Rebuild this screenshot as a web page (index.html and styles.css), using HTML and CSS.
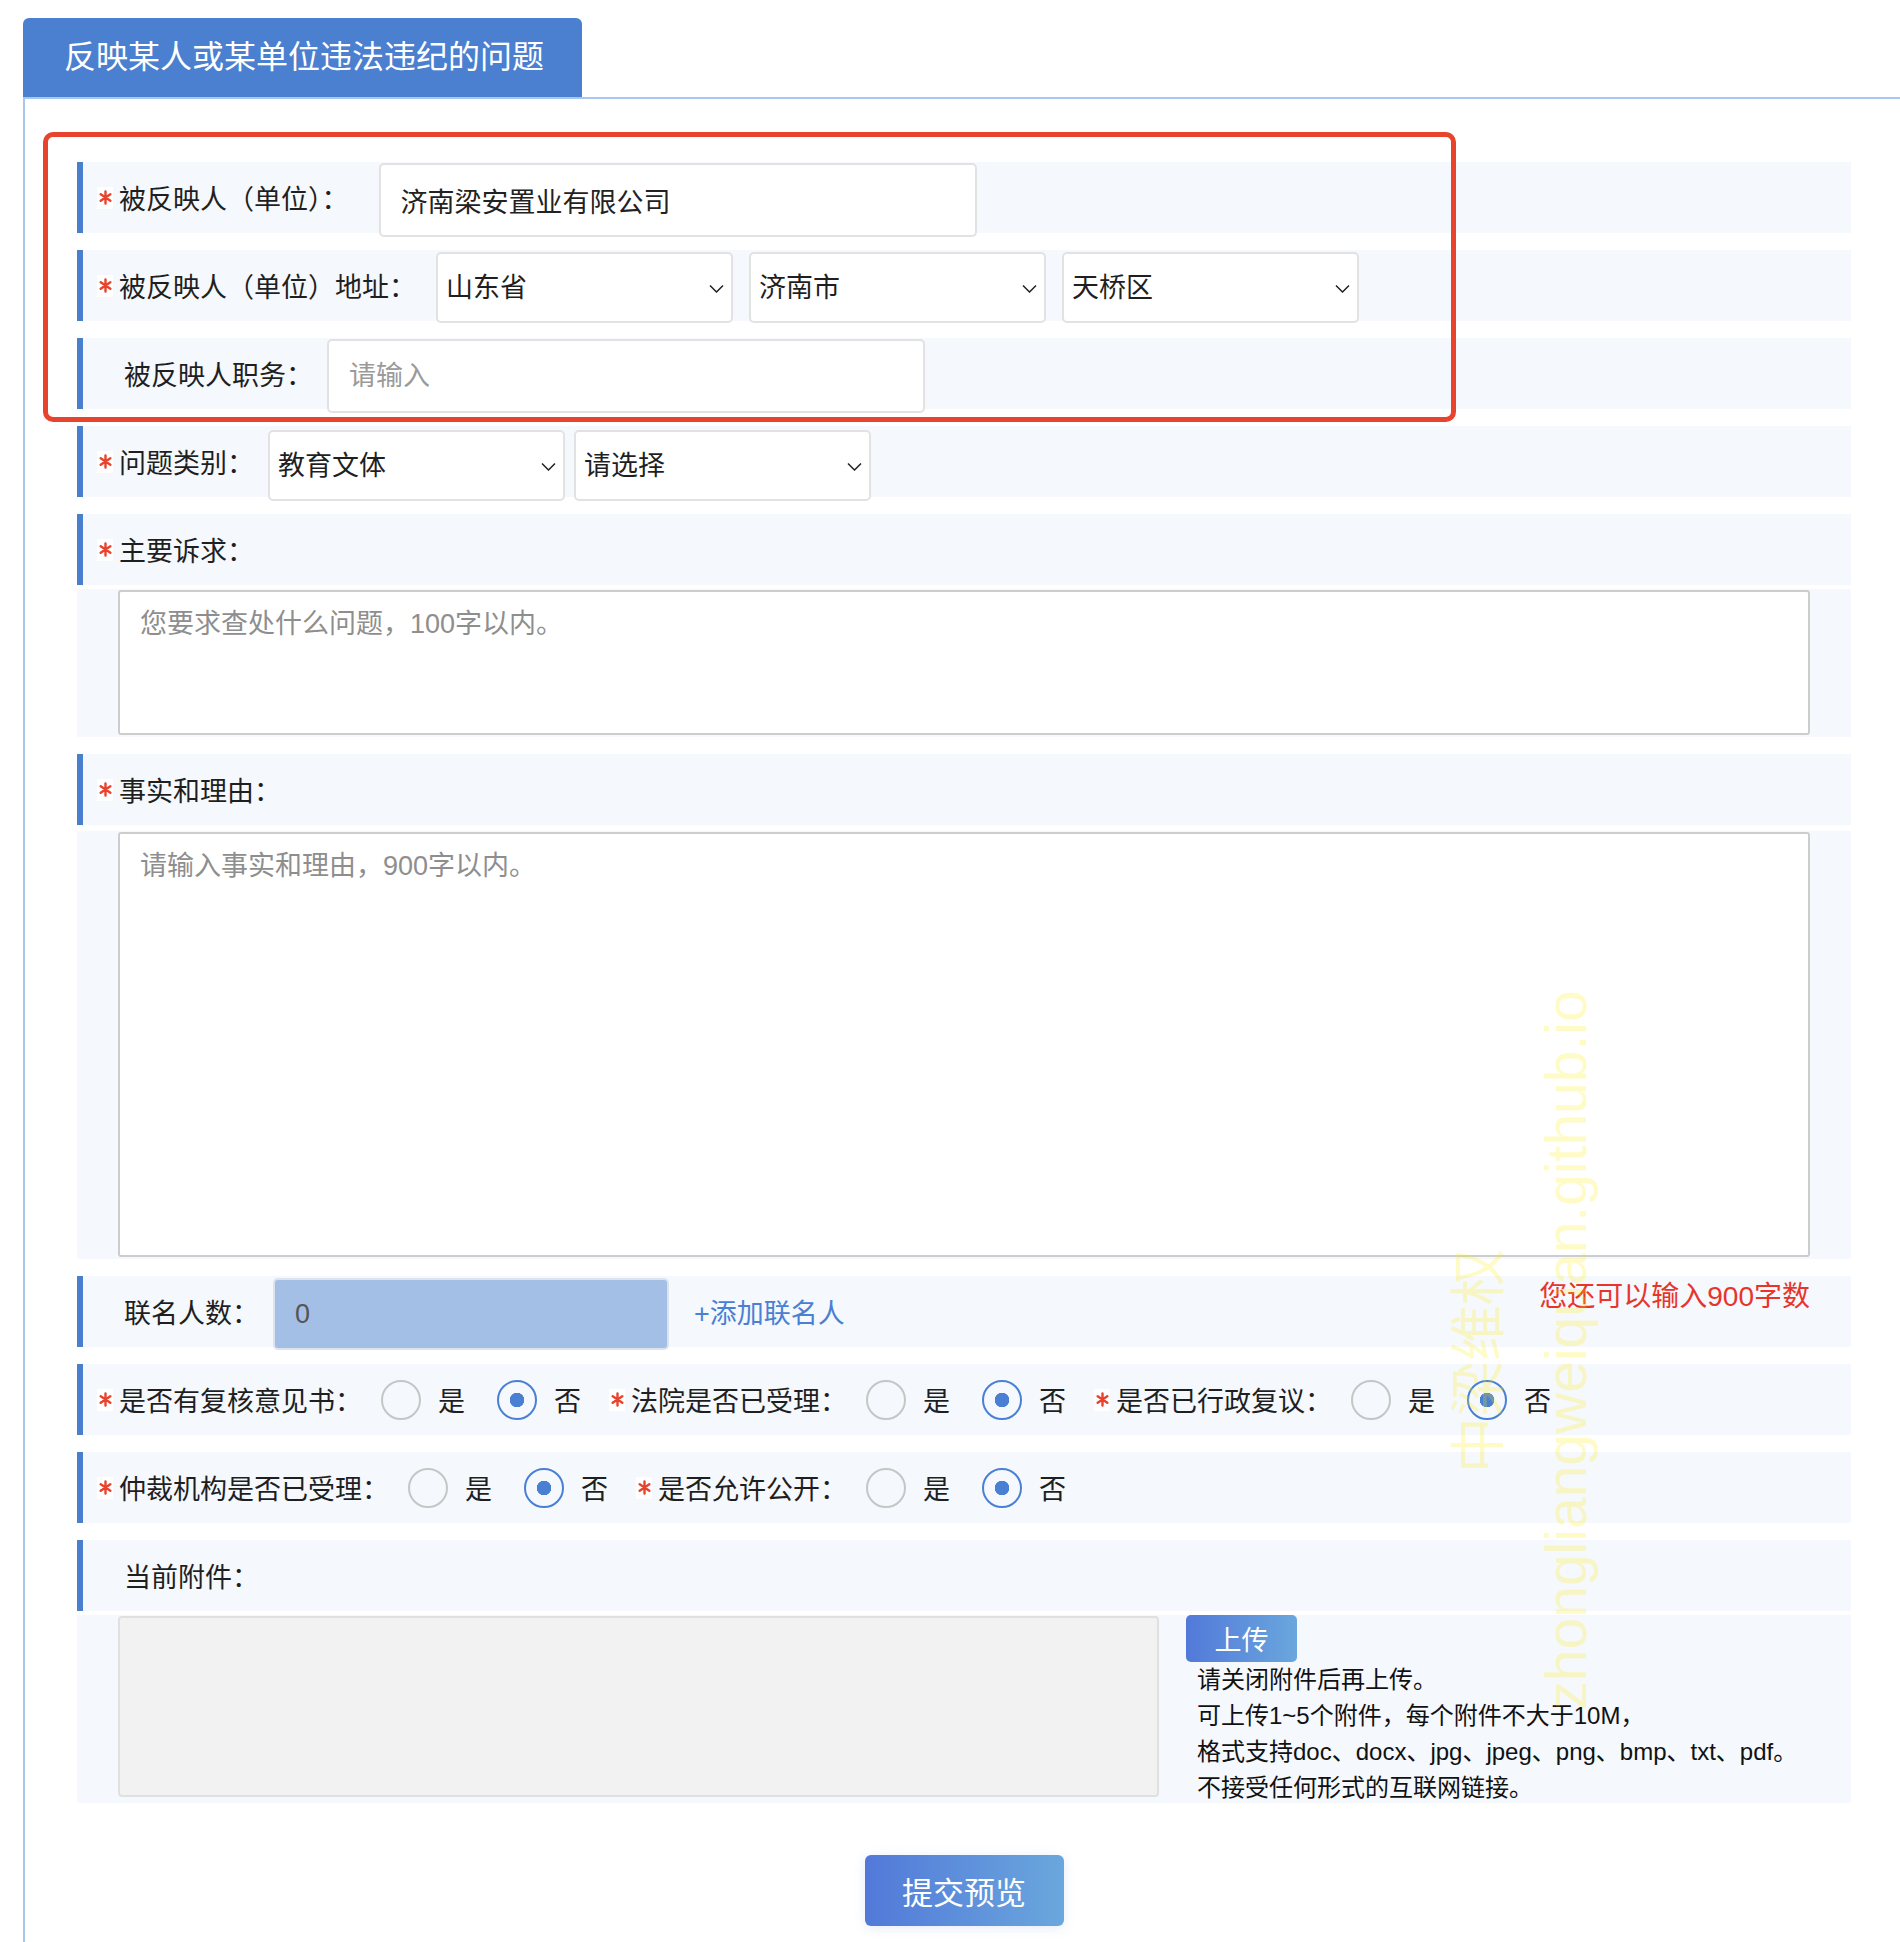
FILE: index.html
```html
<!DOCTYPE html>
<html lang="zh-CN">
<head>
    <meta charset="UTF-8">
    <meta name="viewport" content="width=device-width, initial-scale=1.0">
    <title>反映某人或某单位违法违纪的问题</title>
    <link rel="stylesheet" href="styles.css">
</head>
<body>
    <div class="page">
        <div class="tab">反映某人或某单位违法违纪的问题</div>

        <div class="panel">
            <form class="form" onsubmit="return false">
                <div class="row">
                    <span class="star"><svg viewBox="0 0 14 16" width="13" height="15"><path d="M7 1.5v13M1.8 4.5l10.4 7M1.8 11.5l10.4-7" stroke="#e8432d" stroke-width="2.6" stroke-linecap="round"/></svg></span>
                    <span class="label name">被反映人（单位）：</span>
                    <input class="field w-wide" type="text" value="济南梁安置业有限公司">
                </div>

                <div class="row">
                    <span class="star"><svg viewBox="0 0 14 16" width="13" height="15"><path d="M7 1.5v13M1.8 4.5l10.4 7M1.8 11.5l10.4-7" stroke="#e8432d" stroke-width="2.6" stroke-linecap="round"/></svg></span>
                    <span class="label addr">被反映人（单位）地址：</span>
                    <div class="select-list">
                        <span class="select">
                            <select><option>山东省</option></select>
                            <svg class="chev" viewBox="0 0 15 9" width="15" height="9"><path d="M1 1.5l6.5 6.5 6.5-6.5" fill="none" stroke="#222" stroke-width="1.5"/></svg>
                        </span>
                        <span class="select">
                            <select><option>济南市</option></select>
                            <svg class="chev" viewBox="0 0 15 9" width="15" height="9"><path d="M1 1.5l6.5 6.5 6.5-6.5" fill="none" stroke="#222" stroke-width="1.5"/></svg>
                        </span>
                        <span class="select">
                            <select><option>天桥区</option></select>
                            <svg class="chev" viewBox="0 0 15 9" width="15" height="9"><path d="M1 1.5l6.5 6.5 6.5-6.5" fill="none" stroke="#222" stroke-width="1.5"/></svg>
                        </span>
                    </div>
                </div>

                <div class="row">
                    <span class="nostar"></span>
                    <span class="label">被反映人职务：</span>
                    <input class="field w-wide" type="text" placeholder="请输入">
                </div>

                <div class="row">
                    <span class="star"><svg viewBox="0 0 14 16" width="13" height="15"><path d="M7 1.5v13M1.8 4.5l10.4 7M1.8 11.5l10.4-7" stroke="#e8432d" stroke-width="2.6" stroke-linecap="round"/></svg></span>
                    <span class="label">问题类别：</span>
                    <div class="select-list narrow">
                        <span class="select">
                            <select><option>教育文体</option></select>
                            <svg class="chev" viewBox="0 0 15 9" width="15" height="9"><path d="M1 1.5l6.5 6.5 6.5-6.5" fill="none" stroke="#222" stroke-width="1.5"/></svg>
                        </span>
                        <span class="select">
                            <select><option>请选择</option></select>
                            <svg class="chev" viewBox="0 0 15 9" width="15" height="9"><path d="M1 1.5l6.5 6.5 6.5-6.5" fill="none" stroke="#222" stroke-width="1.5"/></svg>
                        </span>
                    </div>
                </div>

                <div class="row tight">
                    <span class="star"><svg viewBox="0 0 14 16" width="13" height="15"><path d="M7 1.5v13M1.8 4.5l10.4 7M1.8 11.5l10.4-7" stroke="#e8432d" stroke-width="2.6" stroke-linecap="round"/></svg></span>
                    <span class="label">主要诉求：</span>
                </div>
                <div class="area">
                    <textarea class="short" placeholder="您要求查处什么问题，100字以内。"></textarea>
                </div>

                <div class="row tighter">
                    <span class="star"><svg viewBox="0 0 14 16" width="13" height="15"><path d="M7 1.5v13M1.8 4.5l10.4 7M1.8 11.5l10.4-7" stroke="#e8432d" stroke-width="2.6" stroke-linecap="round"/></svg></span>
                    <span class="label">事实和理由：</span>
                </div>
                <div class="area">
                    <textarea class="long" placeholder="请输入事实和理由，900字以内。"></textarea>
                </div>

                <div class="row">
                    <span class="nostar"></span>
                    <span class="label">联名人数：</span>
                    <input class="field count" type="text" value="0" readonly>
                    <a class="add-link" href="#">+添加联名人</a>
                    <span class="remain">您还可以输入900字数</span>
                </div>

                <div class="row">
                    <span class="star"><svg viewBox="0 0 14 16" width="13" height="15"><path d="M7 1.5v13M1.8 4.5l10.4 7M1.8 11.5l10.4-7" stroke="#e8432d" stroke-width="2.6" stroke-linecap="round"/></svg></span>
                    <span class="label choice">是否有复核意见书：</span>
                    <input class="radio" type="radio" name="fuhe"><span class="opt">是</span>
                    <input class="radio" type="radio" name="fuhe" checked><span class="opt last">否</span>
                    <span class="star"><svg viewBox="0 0 14 16" width="13" height="15"><path d="M7 1.5v13M1.8 4.5l10.4 7M1.8 11.5l10.4-7" stroke="#e8432d" stroke-width="2.6" stroke-linecap="round"/></svg></span>
                    <span class="label choice">法院是否已受理：</span>
                    <input class="radio" type="radio" name="fayuan"><span class="opt">是</span>
                    <input class="radio" type="radio" name="fayuan" checked><span class="opt last">否</span>
                    <span class="star"><svg viewBox="0 0 14 16" width="13" height="15"><path d="M7 1.5v13M1.8 4.5l10.4 7M1.8 11.5l10.4-7" stroke="#e8432d" stroke-width="2.6" stroke-linecap="round"/></svg></span>
                    <span class="label choice">是否已行政复议：</span>
                    <input class="radio" type="radio" name="fuyi"><span class="opt">是</span>
                    <input class="radio" type="radio" name="fuyi" checked><span class="opt last">否</span>
                </div>

                <div class="row">
                    <span class="star"><svg viewBox="0 0 14 16" width="13" height="15"><path d="M7 1.5v13M1.8 4.5l10.4 7M1.8 11.5l10.4-7" stroke="#e8432d" stroke-width="2.6" stroke-linecap="round"/></svg></span>
                    <span class="label choice">仲裁机构是否已受理：</span>
                    <input class="radio" type="radio" name="zhongcai"><span class="opt">是</span>
                    <input class="radio" type="radio" name="zhongcai" checked><span class="opt last">否</span>
                    <span class="star"><svg viewBox="0 0 14 16" width="13" height="15"><path d="M7 1.5v13M1.8 4.5l10.4 7M1.8 11.5l10.4-7" stroke="#e8432d" stroke-width="2.6" stroke-linecap="round"/></svg></span>
                    <span class="label choice">是否允许公开：</span>
                    <input class="radio" type="radio" name="gongkai"><span class="opt">是</span>
                    <input class="radio" type="radio" name="gongkai" checked><span class="opt last">否</span>
                </div>

                <div class="row tight">
                    <span class="nostar"></span>
                    <span class="label">当前附件：</span>
                </div>
                <div class="attach">
                    <div class="file-box"></div>
                    <div class="upload-col">
                        <button class="upload-btn" type="button">上传</button>
                        <p class="tips">
                            请关闭附件后再上传。<br>
                            可上传1~5个附件，每个附件不大于10M，<br>
                            格式支持doc、docx、jpg、jpeg、png、bmp、txt、pdf。<br>
                            不接受任何形式的互联网链接。
                        </p>
                    </div>
                </div>

                <button class="submit-btn" type="button">提交预览</button>
            </form>
        </div>

        <div class="highlight"></div>
        <div class="watermark cn">中梁维权</div>
        <div class="watermark en">zhongliangweiquan.github.io</div>
    </div>
</body>
</html>
```

FILE: styles.css
```css
body {
    margin: 0;
    font-family: "Liberation Sans", "Noto Sans CJK SC", sans-serif;
    color: #1f1f1f;
    background-color: #fff;
}

.page {
    position: relative;
    padding: 18px 0 0 23px;
}

.tab {
    width: 559px;
    height: 79px;
    box-sizing: border-box;
    padding-left: 41px;
    background-color: #4b7fcf;
    color: #fff;
    font-size: 32px;
    line-height: 79px;
    border-radius: 6px 6px 0 0;
}

.panel {
    border-top: 2px solid #a6c7f0;
    border-left: 2px solid #a6c7f0;
    padding: 63px 49px 18px 52px;
}

.row {
    display: flex;
    align-items: center;
    height: 71px;
    box-sizing: border-box;
    background-color: #f5f8fc;
    border-left: 6px solid #4a7fd0;
    padding-left: 14px;
    margin-bottom: 17px;
    position: relative;
}

.row.tight {
    margin-bottom: 4px;
}

.row.tighter {
    margin-bottom: 6px;
}

.star {
    display: flex;
    align-items: center;
    justify-content: center;
    width: 16px;
    height: 22px;
    background-color: #fff;
    margin-right: 6px;
    flex-shrink: 0;
}

.nostar {
    width: 27px;
    flex-shrink: 0;
}

.label {
    font-size: 27px;
    white-space: nowrap;
    margin-right: 14px;
}

.label.name {
    margin-right: 30px;
}

.label.addr {
    margin-right: 20px;
}

.label.choice {
    margin-right: 19px;
}

.field {
    align-self: flex-start;
    margin-top: 1px;
    height: 74px;
    box-sizing: border-box;
    border: 2px solid #e2e2e2;
    border-radius: 5px;
    background-color: #fff;
    font-family: inherit;
    font-size: 27px;
    color: #222;
    padding: 0 20px;
    outline: none;
}

.field::placeholder {
    color: #9a9a9a;
}

.w-wide {
    width: 598px;
}

.field.count {
    width: 396px;
    height: 72px;
    margin-top: 2px;
    background-color: #a3bfe5;
    border-color: #dce3ed;
    color: #555;
}

.add-link {
    margin-left: 25px;
    font-size: 27px;
    color: #4a80d4;
    text-decoration: none;
}

.remain {
    align-self: flex-start;
    margin: -2px 41px 0 auto;
    font-size: 28px;
    color: #e8352a;
}

.select-list {
    display: flex;
    gap: 16px;
    align-self: flex-start;
    margin-top: 2px;
}

.select-list.narrow {
    gap: 9px;
    margin-top: 4px;
}

.select {
    position: relative;
    width: 297px;
    height: 71px;
}

.select select {
    appearance: none;
    -webkit-appearance: none;
    width: 100%;
    height: 100%;
    box-sizing: border-box;
    border: 2px solid #e2e2e2;
    border-radius: 5px;
    background-color: #fff;
    padding-left: 8px;
    font-family: inherit;
    font-size: 27px;
    color: #1f1f1f;
    outline: none;
}

.chev {
    position: absolute;
    right: 9px;
    top: 50%;
    margin-top: -4px;
    pointer-events: none;
}

.area {
    background-color: #f5f8fc;
    padding: 1px 41px 2px;
    margin-bottom: 17px;
}

.area textarea {
    display: block;
    width: 100%;
    box-sizing: border-box;
    border: 2px solid #cdcdcd;
    border-radius: 3px;
    resize: none;
    font-family: inherit;
    font-size: 27px;
    padding: 10px 20px;
    outline: none;
}

.area textarea::placeholder {
    color: #8e8e8e;
}

.area textarea.short {
    height: 145px;
}

.area textarea.long {
    height: 425px;
}

.radio {
    appearance: none;
    -webkit-appearance: none;
    width: 40px;
    height: 40px;
    box-sizing: border-box;
    margin: 0 17px 0 0;
    border: 2.5px solid #c6c6c6;
    border-radius: 50%;
    background-color: transparent;
    flex-shrink: 0;
}

.radio:checked {
    border-color: #4a80d4;
    background: radial-gradient(circle, #4a80d4 0 7px, transparent 7.5px);
}

.opt {
    font-size: 27px;
    margin-right: 32px;
}

.opt.last {
    margin-right: 28px;
}

.attach {
    display: flex;
    align-items: flex-start;
    height: 188px;
    box-sizing: border-box;
    background-color: #f5f8fc;
    padding: 1px 41px 0;
    margin-bottom: 52px;
}

.file-box {
    width: 1041px;
    height: 181px;
    box-sizing: border-box;
    background-color: #f2f2f2;
    border: 2px solid #e0e0e0;
    border-radius: 4px;
    flex-shrink: 0;
}

.upload-col {
    margin-left: 27px;
    margin-top: -1px;
}

.upload-btn {
    width: 111px;
    height: 47px;
    border: none;
    border-radius: 5px;
    background: linear-gradient(90deg, #5279d9, #6aa7dd);
    color: #fff;
    font-family: inherit;
    font-size: 27px;
    cursor: pointer;
}

.tips {
    margin: 0 0 0 11px;
    font-size: 24px;
    line-height: 36px;
    color: #111;
    white-space: nowrap;
}

.submit-btn {
    display: block;
    margin: 0 auto;
    width: 199px;
    height: 71px;
    border: none;
    border-radius: 6px;
    background: linear-gradient(90deg, #5279d9, #6aa7dd);
    box-shadow: 0 2px 12px rgba(80, 120, 200, 0.15);
    color: #fff;
    font-family: inherit;
    font-size: 31px;
    cursor: pointer;
}

.highlight {
    position: absolute;
    left: 43px;
    top: 132px;
    width: 1413px;
    height: 290px;
    box-sizing: border-box;
    border: 5px solid #e8432d;
    border-radius: 10px;
    pointer-events: none;
}

.watermark {
    position: absolute;
    white-space: nowrap;
    line-height: 1;
    color: rgba(255, 238, 0, 0.22);
    transform: translate(-50%, -50%) rotate(-90deg);
    pointer-events: none;
}

.watermark.en {
    left: 1566px;
    top: 1350px;
    font-size: 57px;
}

.watermark.cn {
    left: 1479px;
    top: 1361px;
    font-size: 56px;
}
```
